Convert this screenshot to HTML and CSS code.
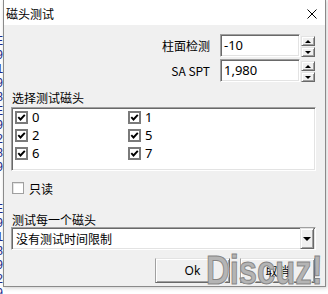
FILE: index.html
```html
<!DOCTYPE html>
<html lang="zh-CN">
<head>
    <meta charset="UTF-8">
    <title>磁头测试</title>
    <link rel="stylesheet" href="styles.css">
</head>
<body>
    <div class="backdrop">
        <p>E</p><p>9</p><p>1</p><p>9</p><p>8</p><p>E</p><p>9</p><p>2</p><p>8</p><p>9</p>
        <p>E</p><p>9</p><p>1</p><p>8</p><p>9</p><p>2</p><p>9</p><p>8</p><p>E</p><p>9</p>
        <p class="last">国     〈/       目日日日日·日■W~    乙〈V</p>
    </div>

    <div class="dialog">
        <div class="titlebar">
            <span class="title">磁头测试</span>
            <svg class="close" width="10" height="10" viewBox="0 0 10 10">
                <path d="M0.5 0.5 L9.5 9.5 M9.5 0.5 L0.5 9.5" stroke="#000" stroke-width="1" fill="none"/>
            </svg>
        </div>

        <div class="content">
            <div class="field">
                <label>柱面检测</label>
                <div class="textbox">-10</div>
                <div class="spin">
                    <span class="spin-btn"><i class="arrow-up"></i></span>
                    <span class="spin-btn"><i class="arrow-down"></i></span>
                </div>
            </div>
            <div class="field">
                <label>SA SPT</label>
                <div class="textbox">1,980</div>
                <div class="spin">
                    <span class="spin-btn"><i class="arrow-up"></i></span>
                    <span class="spin-btn"><i class="arrow-down"></i></span>
                </div>
            </div>

            <div class="group-label first">选择测试磁头</div>
            <div class="listbox">
                <div class="check-item"><span class="box checked"></span>0</div>
                <div class="check-item"><span class="box checked"></span>1</div>
                <div class="check-item"><span class="box checked"></span>2</div>
                <div class="check-item"><span class="box checked"></span>5</div>
                <div class="check-item"><span class="box checked"></span>6</div>
                <div class="check-item"><span class="box checked"></span>7</div>
            </div>

            <div class="readonly"><span class="box"></span>只读</div>

            <div class="group-label second">测试每一个磁头</div>
            <div class="combo">
                <span class="combo-text">没有测试时间限制</span>
                <span class="combo-btn"><i class="arrow-drop"></i></span>
            </div>

            <div class="buttons">
                <button type="button">Ok</button>
                <button type="button">取消</button>
            </div>
        </div>

        <div class="watermark">Discuz!</div>
    </div>
</body>
</html>
```

FILE: styles.css
```css
* {
    box-sizing: border-box;
}
body {
    margin: 0;
    width: 328px;
    height: 294px;
    overflow: hidden;
    position: relative;
    background-color: #fff;
    font-family: "Noto Sans", "Noto Sans CJK SC", sans-serif;
    font-size: 12px;
    color: #000;
}

/* page behind the dialog */
.backdrop {
    padding-top: 7px;
    margin-left: -4px;
    color: #1c2a8c;
    font-family: "Liberation Mono", "Noto Sans CJK SC", monospace;
    font-size: 12px;
    line-height: 14px;
    white-space: pre;
}
.backdrop p {
    margin: 0;
}
.backdrop .last {
    margin-left: 2px;
    color: #2a2a5a;
}

/* dialog window */
.dialog {
    position: absolute;
    left: 3px;
    top: -1px;
    width: 323px;
    background-color: #f0f0f0;
    border: 1px solid #8a8a8a;
    box-shadow: 1px 1px 4px rgba(0, 0, 0, 0.2);
}
.titlebar {
    height: 25px;
    padding: 3px 8px 0 2px;
    background-color: #fff;
    display: flex;
    align-items: center;
    justify-content: space-between;
    font-family: "Noto Sans CJK SC", sans-serif;
}
.title {
    line-height: 14px;
}
.content {
    padding: 9px 9px 3px 7px;
}

/* number fields */
.field {
    height: 23px;
    padding-right: 1px;
    display: flex;
    align-items: flex-start;
    justify-content: flex-end;
}
.field + .field {
    margin-top: 2px;
}
.field label {
    margin-right: 10px;
    line-height: 23px;
    font-family: "Noto Sans CJK SC", sans-serif;
}
.textbox {
    width: 80px;
    height: 23px;
    padding-left: 3px;
    background-color: #fff;
    border-top: 1px solid #a0a0a0;
    border-left: 1px solid #a0a0a0;
    border-right: 1px solid #fff;
    border-bottom: 1px solid #fff;
    box-shadow: inset 1px 1px #696969, inset -1px -1px #e3e3e3;
    font-size: 13px;
    line-height: 21px;
}
.spin {
    width: 14px;
    margin-left: 1px;
    margin-top: 2px;
    display: flex;
    flex-direction: column;
    gap: 1px;
}
.spin-btn, .combo-btn {
    display: flex;
    align-items: center;
    justify-content: center;
    background-color: #f0f0f0;
    border-top: 1px solid #e3e3e3;
    border-left: 1px solid #e3e3e3;
    border-right: 1px solid #696969;
    border-bottom: 1px solid #696969;
    box-shadow: inset 1px 1px #fff, inset -1px -1px #a0a0a0;
}
.spin-btn {
    height: 10px;
}
.arrow-up, .arrow-down {
    width: 0;
    height: 0;
    border-left: 3px solid transparent;
    border-right: 3px solid transparent;
}
.arrow-up {
    border-bottom: 3px solid #000;
}
.arrow-down {
    border-top: 3px solid #000;
}

/* head selection */
.group-label {
    padding-left: 1px;
    line-height: 14px;
    font-family: "Noto Sans CJK SC", sans-serif;
}
.group-label.first {
    margin-top: 9px;
    margin-bottom: 2px;
}
.group-label.second {
    margin-top: 18px;
}
.listbox {
    height: 64px;
    padding: 0 3px;
    background-color: #fff;
    border-top: 1px solid #a0a0a0;
    border-left: 1px solid #a0a0a0;
    border-right: 1px solid #fff;
    border-bottom: 1px solid #fff;
    box-shadow: inset 1px 1px #696969, inset -1px -1px #e3e3e3;
    display: grid;
    grid-template-columns: 113px 1fr;
    grid-auto-rows: 18px;
    align-content: start;
}
.check-item {
    display: flex;
    align-items: center;
    gap: 4px;
    font-size: 13px;
}
.box {
    width: 13px;
    height: 13px;
    background-color: #fff;
    border: 2px solid #7a7a7a;
    display: inline-block;
}
.box.checked {
    background: #fff url("data:image/svg+xml,%3Csvg xmlns='http://www.w3.org/2000/svg' width='9' height='9' viewBox='0 0 9 9'%3E%3Cpath d='M1.3 4.2 L3.5 6.5 L7.8 1.8' stroke='%23000' stroke-width='1.9' fill='none'/%3E%3C/svg%3E") center / 9px 9px no-repeat;
}
.readonly {
    margin-top: 10px;
    padding-left: 1px;
    height: 14px;
    display: flex;
    align-items: center;
    gap: 5px;
    font-family: "Noto Sans CJK SC", sans-serif;
}
.readonly .box {
    width: 12px;
    height: 12px;
    border: 1px solid #a0a0a0;
    box-shadow: inset 1px 1px #e3e3e3;
}

/* time limit combo */
.combo {
    height: 23px;
    display: flex;
    align-items: center;
    background-color: #fff;
    border-top: 1px solid #a0a0a0;
    border-left: 1px solid #a0a0a0;
    border-right: 1px solid #fff;
    border-bottom: 1px solid #fff;
    box-shadow: inset 1px 1px #696969, inset -1px -1px #e3e3e3;
}
.combo-text {
    flex: 1;
    padding-left: 4px;
    font-family: "Noto Sans CJK SC", sans-serif;
}
.combo-btn {
    width: 14px;
    height: 21px;
    margin-right: 1px;
}
.arrow-drop {
    width: 0;
    height: 0;
    border-left: 4px solid transparent;
    border-right: 4px solid transparent;
    border-top: 4px solid #000;
}

/* bottom buttons */
.buttons {
    margin-top: 8px;
    padding-right: 1px;
    display: flex;
    justify-content: flex-end;
    gap: 10px;
}
button {
    width: 75px;
    height: 25px;
    padding: 0;
    background-color: #f0f0f0;
    border-top: 1px solid #e3e3e3;
    border-left: 1px solid #a0a0a0;
    border-right: 1px solid #696969;
    border-bottom: 1px solid #696969;
    box-shadow: inset 1px 1px #fff, inset -1px -1px #a0a0a0;
    font-family: "Noto Sans", "Noto Sans CJK SC", sans-serif;
    font-size: 12px;
    color: #000;
}

/* forum watermark lying over the buttons */
.watermark {
    position: absolute;
    left: 202px;
    top: 250px;
    font-family: "Liberation Sans", Arial, sans-serif;
    font-weight: bold;
    font-size: 40px;
    line-height: 40px;
    color: #b4b4b4;
    -webkit-text-stroke: 1px #858585;
    text-shadow: 1px 1px 0 #fff;
    transform: scaleX(0.82);
    transform-origin: left top;
}
```
